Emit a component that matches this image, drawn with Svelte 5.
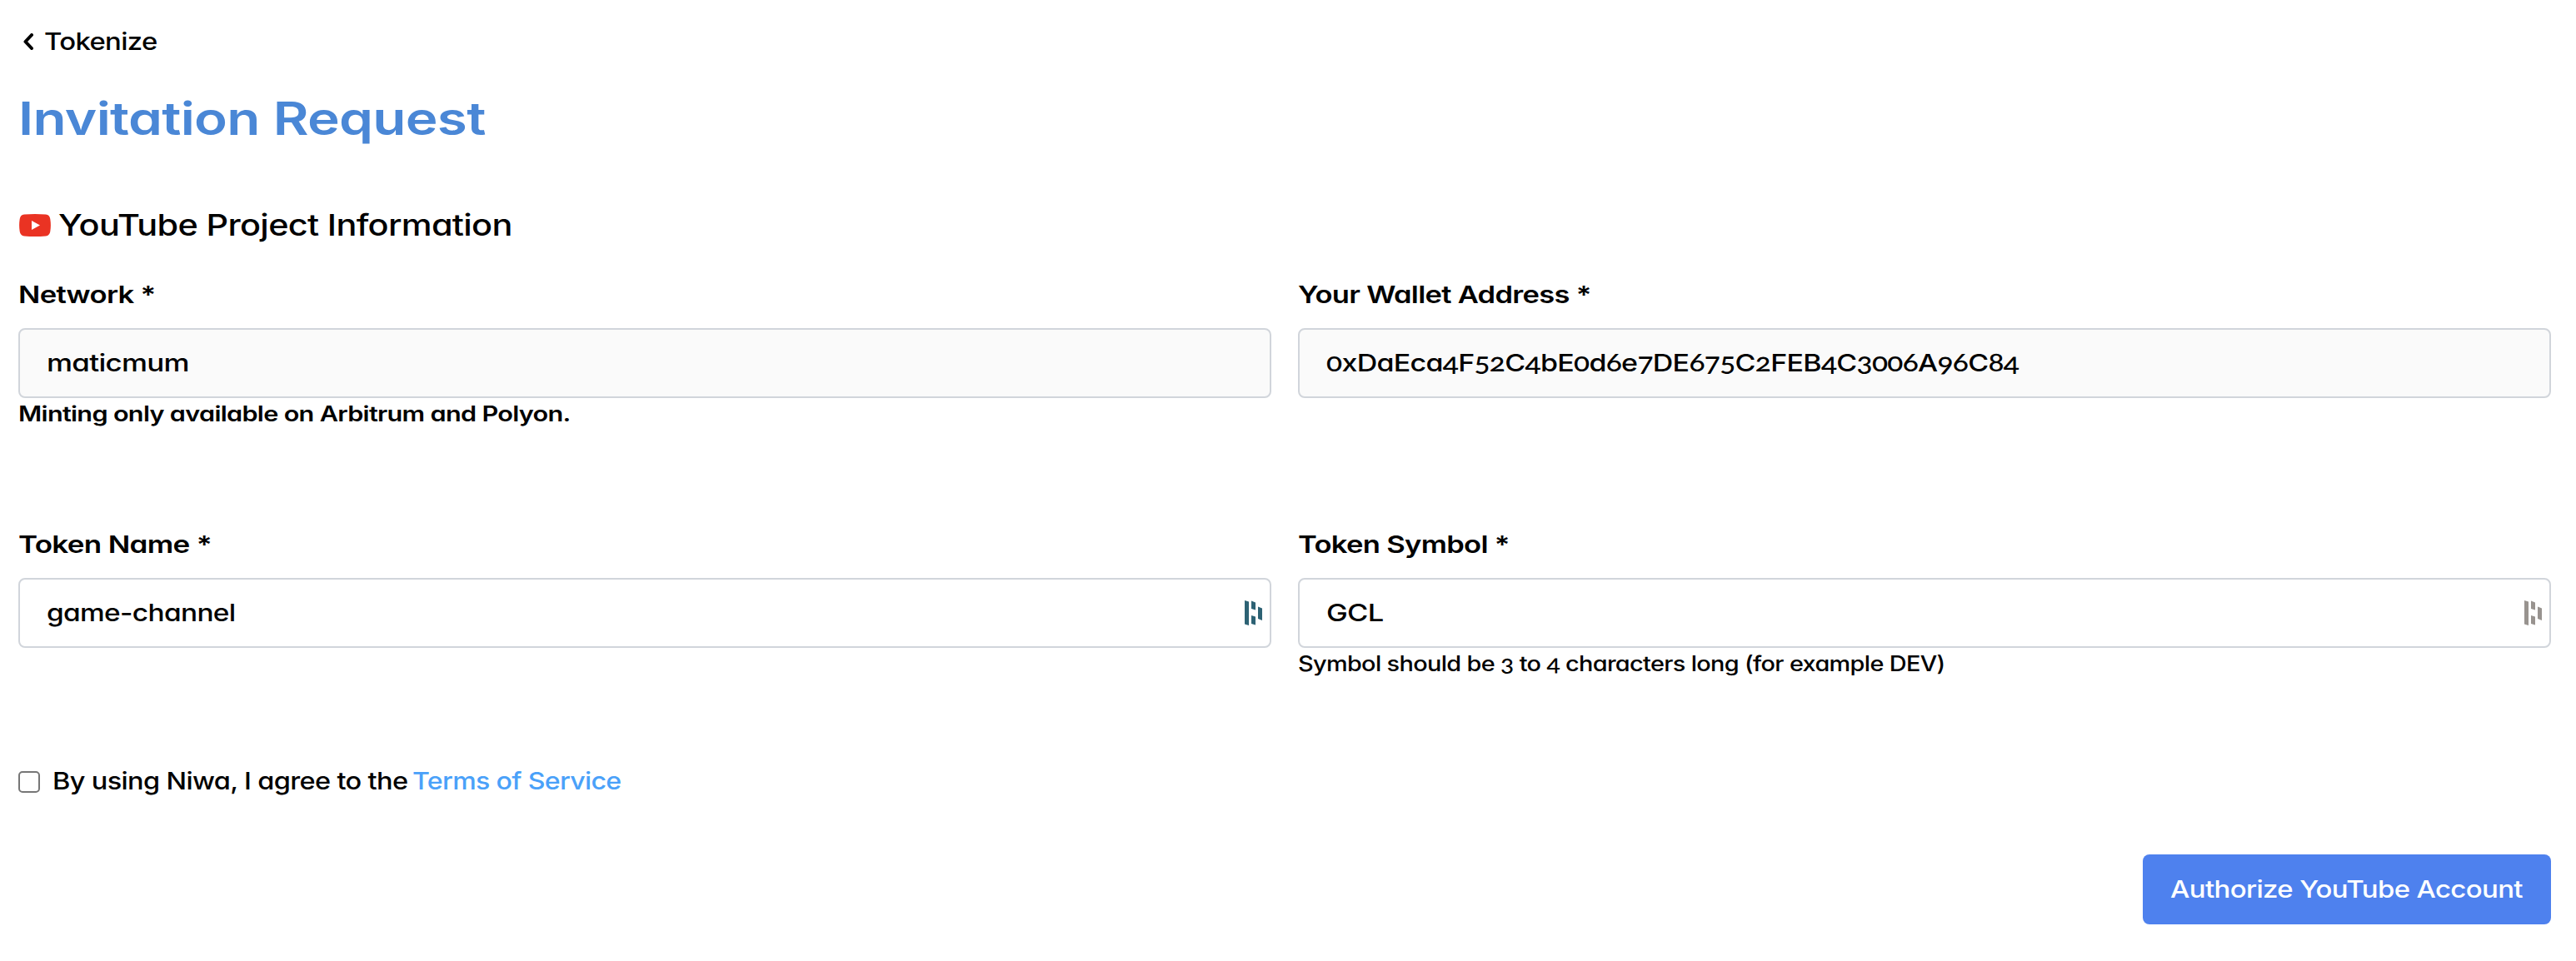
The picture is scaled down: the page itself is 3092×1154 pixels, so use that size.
<script>
  const rows = [
    [
      { label: 'Network *', labelWidth: 165, value: 'maticmum', valueWidth: 171, locked: true,
        hint: 'Minting only available on Arbitrum and Polyon.', hintWidth: 663, strong: true },
      { label: 'Your Wallet Address *', labelWidth: 352, value: '0xDaEca4F52C4bE0d6e7DE675C2FEB4C3006A96C84', valueWidth: 831, locked: true }
    ],
    [
      { label: 'Token Name *', labelWidth: 232, value: 'game-channel', valueWidth: 226, manager: 'active' },
      { label: 'Token Symbol *', labelWidth: 254, value: 'GCL', valueWidth: 69, manager: 'idle',
        hint: 'Symbol should be 3 to 4 characters long (for example DEV)', hintWidth: 776 }
    ]
  ];

  // Stretches a line of text horizontally to the given width.
  function fit(node, width) {
    const apply = () => {
      node.style.transform = 'none';
      const natural = node.offsetWidth;
      node.style.transform = `scaleX(${width / natural})`;
      node.style.marginRight = `${width - natural}px`;
    };
    apply();
    document.fonts.ready.then(apply);
  }

  // Separates digits so that they can use old-style figures.
  const pieces = (text) => text.split(/(\d+)/).filter(Boolean);
</script>

{#snippet line(text, width)}
  <span class="line" use:fit={width}>{#each pieces(text) as piece}{#if /\d/.test(piece)}<span class="figures">{piece}</span>{:else}{piece}{/if}{/each}</span>
{/snippet}

<main>
  <nav>
    <svg class="chevron" viewBox="0 0 12 20"><path d="M10 2 L2.500 10 L10 18" /></svg>
    {@render line('Tokenize', 136)}
  </nav>
  <h1>{@render line('Invitation Request', 561)}</h1>
  <h2>
    <svg class="youtube" viewBox="0 0 38 27">
      <path d="M6 .6 Q19 -.6 32 .6 Q36.500 1 37.300 6 Q38.500 13.500 37.300 21 Q36.500 26 32 26.400 Q19 27.600 6 26.400 Q1.500 26 .7 21 Q-.5 13.500 .7 6 Q1.500 1 6 .6 Z" fill="#ea3323" />
      <path d="M15 8 L25 13.500 L15 19 Z" fill="#fff" />
    </svg>
    {@render line('YouTube Project Information', 545)}
  </h2>

  <form>
    {#each rows as row}
      <div class="row">
        {#each row as field}
          <div class="field">
            <div class="label">{@render line(field.label, field.labelWidth)}</div>
            <div class="input" class:locked={field.locked}>
              {@render line(field.value, field.valueWidth)}
              {#if field.manager}
                <svg class="manager {field.manager}" viewBox="0 0 22 30">
                  <path d="M0 0 L5 1.500 V30 L0 28.500 Z M8 .5 L13 2.500 V11.500 L8 10 Z M8 18 L13 19.500 V29.500 L8 28 Z M16 7.500 L21 9.500 V24 L16 22 Z" />
                </svg>
              {/if}
            </div>
            <div class="hint" class:strong={field.strong}>
              {#if field.hint}{@render line(field.hint, field.hintWidth)}{/if}
            </div>
          </div>
        {/each}
      </div>
    {/each}

    <div class="terms">
      <span class="checkbox"></span>
      {@render line('By using Niwa, I agree to the', 426)}
      <a href="#terms">{@render line('Terms of Service', 251)}</a>
    </div>
    <div class="actions">
      <button type="button">{@render line('Authorize YouTube Account', 423)}</button>
    </div>
  </form>
</main>

<style>
  :global(body) {
    background: #fff;
  }
  main {
    box-sizing: border-box;
    padding: 29px 30px 44px 22px;
    font: 500 29px Inter, 'Liberation Sans', sans-serif;
    font-feature-settings: 'cv11';
    letter-spacing: -0.02em;
    color: #000;
  }
  .line {
    display: inline-block;
    flex: none;
    white-space: pre;
    transform-origin: 0 50%;
  }
  .figures {
    font-family: Lato, sans-serif;
    font-size: 1.04em;
    line-height: 1;
    font-feature-settings: 'onum';
  }
  nav {
    display: flex;
    align-items: center;
    height: 40px;
  }
  .chevron {
    width: 12px;
    height: 20px;
    margin: 2px 13px 0 6px;
    fill: none;
    stroke: #000;
    stroke-width: 4;
    stroke-linecap: round;
    stroke-linejoin: round;
  }
  h1 {
    display: flex;
    margin: 36px 0 0;
    height: 75px;
    font-size: 54.5px;
    font-weight: 590;
    line-height: 75px;
    color: #4a87d6;
  }
  h2 {
    display: flex;
    align-items: center;
    margin: 71px 0 42px;
    height: 40px;
    font-size: 35.5px;
    font-weight: 500;
    line-height: 40px;
  }
  .youtube {
    width: 38px;
    height: 27px;
    margin: 0 9px 2px 1px;
  }
  .row {
    display: grid;
    grid-template-columns: 1fr 1fr;
    gap: 32px;
  }
  .row + .row {
    margin-top: 117px;
  }
  .label {
    height: 41px;
    margin-bottom: 20px;
    font-weight: 600;
    line-height: 41px;
  }
  .input {
    box-sizing: border-box;
    display: flex;
    align-items: center;
    height: 84px;
    padding: 0 8px 0 32px;
    border: 2px solid #d1d5db;
    border-radius: 8px;
    line-height: 40px;
  }
  .locked {
    background: #fafafa;
  }
  .manager {
    width: 22px;
    height: 30px;
    margin-left: auto;
  }
  .active {
    fill: #2d6274;
  }
  .idle {
    fill: #98938f;
  }
  .hint {
    height: 38px;
    font-size: 25.6px;
    line-height: 38px;
  }
  .strong {
    font-weight: 600;
  }
  .terms {
    display: flex;
    align-items: center;
    height: 40px;
    margin-top: 101px;
  }
  .checkbox {
    box-sizing: border-box;
    width: 26px;
    height: 26px;
    margin: 4px 15px 0 0;
    border: 2px solid #767676;
    border-radius: 5px;
  }
  a {
    margin-left: 6px;
    color: #4aa1f9;
    text-decoration: none;
  }
  .actions {
    display: flex;
    justify-content: flex-end;
    margin-top: 69px;
  }
  button {
    box-sizing: border-box;
    display: flex;
    align-items: center;
    justify-content: center;
    width: 490px;
    height: 84px;
    padding: 0 2px 2px 0;
    border: 0;
    border-radius: 8px;
    background: #4e81ee;
    color: #fff;
    font: inherit;
    font-feature-settings: inherit;
    letter-spacing: inherit;
  }
</style>
